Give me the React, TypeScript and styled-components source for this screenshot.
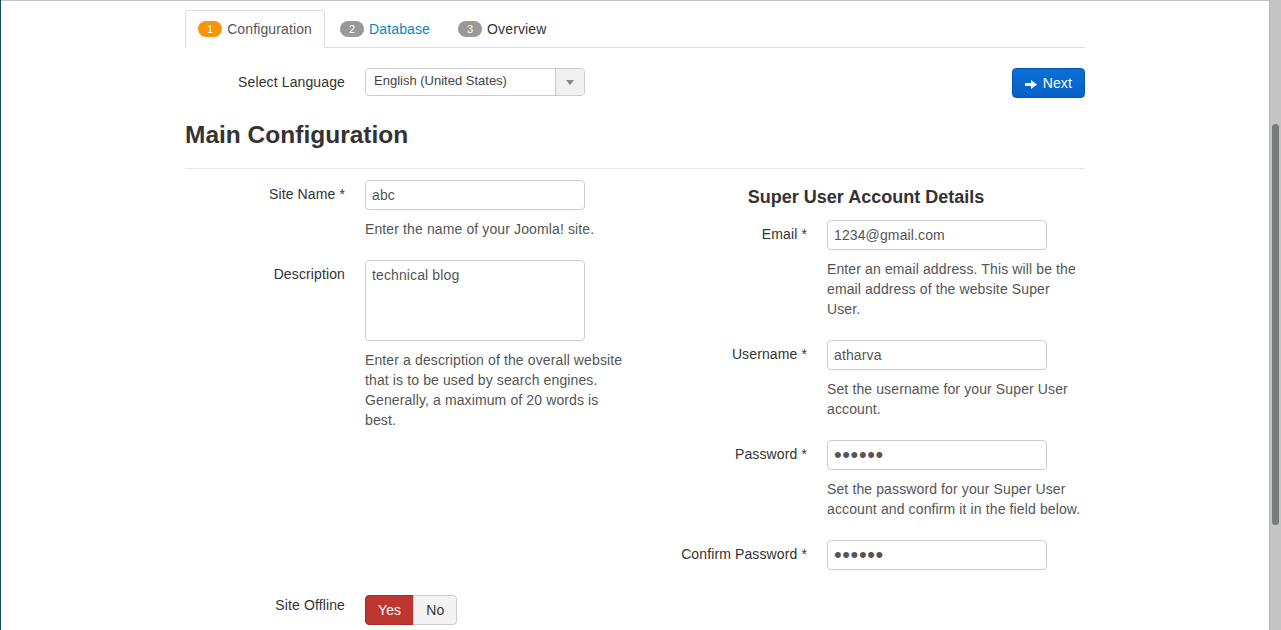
import React from "react";
import styled, { createGlobalStyle } from "styled-components";

const GlobalStyle = createGlobalStyle`
  html, body { margin: 0; padding: 0; background: #fff; }
  body {
    font-family: "Liberation Sans", Arial, Helvetica, sans-serif;
    font-size: 14px;
    line-height: 20px;
    letter-spacing: 0.12px;
    color: #333;
  }
  * { box-sizing: border-box; }
`;

const Frame = styled.div`
  display: flex;
  height: 630px;
  overflow: hidden;
  border-left: 1px solid #1d4a66;
`;

const Viewport = styled.div`
  flex: 1;
  min-width: 0;
  border-top: 1px solid #c4c4c4;
  overflow: hidden;
`;

const ScrollTrack = styled.div`
  width: 12px;
  flex: none;
  background: #c4c4c4;
  border-left: 1px solid #b2b2b2;
  padding-top: 124px;
  display: flex;
  justify-content: center;
`;

const ScrollThumb = styled.div`
  width: 7px;
  height: 401px;
  border-radius: 4px;
  background: #777b7b;
`;

const Container = styled.div`
  width: 900px;
  margin: 0 auto;
  padding-top: 9px;
`;

const TabList = styled.ul`
  display: flex;
  list-style: none;
  margin: 0 0 20px;
  padding: 0;
  border-bottom: 1px solid #ddd;
`;

const Tab = styled.li<{ $active?: boolean; $tone: string }>`
  display: flex;
  align-items: center;
  gap: 5px;
  margin: 0 2px -1px 0;
  padding: 8px 12px;
  line-height: 20px;
  border: 1px solid ${(p) => (p.$active ? "#ddd" : "transparent")};
  border-bottom-color: transparent;
  border-radius: 4px 4px 0 0;
  background: ${(p) => (p.$active ? "#fff" : "transparent")};
  color: ${(p) => p.$tone};
`;

const Badge = styled.span<{ $color: string }>`
  display: inline-block;
  padding: 1px 9px;
  border-radius: 9px;
  font-size: 11px;
  line-height: 14px;
  letter-spacing: 0;
  color: #fff;
  background: ${(p) => p.$color};
`;

const TopRow = styled.div`
  display: flex;
  justify-content: space-between;
  align-items: flex-start;
  height: 30px;
  margin-bottom: 17px;
`;

const FieldGroup = styled.div<{ $last?: boolean }>`
  display: grid;
  grid-template-columns: 160px 1fr;
  column-gap: 20px;
  margin-bottom: ${(p) => (p.$last ? "0" : "21px")};
`;

const FieldLabel = styled.label<{ $flush?: boolean }>`
  text-align: right;
  padding-top: ${(p) => (p.$flush ? "0" : "4px")};
  line-height: 20px;
  color: #333;
`;

const Controls = styled.div`
  min-width: 0;
`;

const SelectBox = styled.div`
  display: flex;
  width: 220px;
  height: 28px;
  border: 1px solid #ccc;
  border-radius: 4px;
  background: #fff;
  overflow: hidden;
`;

const SelectValue = styled.span`
  flex: 1;
  padding: 0 8px;
  font-size: 13px;
  line-height: 24px;
  letter-spacing: 0;
  color: #444;
`;

const SelectArrow = styled.span`
  width: 29px;
  display: flex;
  align-items: center;
  justify-content: center;
  background: #f0f0f0;
  border-left: 1px solid #ccc;
`;

const NextButton = styled.button`
  display: flex;
  align-items: center;
  gap: 6px;
  padding: 4px 12px;
  font-family: inherit;
  font-size: 14px;
  line-height: 20px;
  letter-spacing: 0.12px;
  color: #fff;
  border: 1px solid #0456ad;
  border-radius: 4px;
  background: linear-gradient(#0b6fd7, #0562c6);
  cursor: pointer;
`;

const ArrowIcon = styled.svg`
  width: 12px;
  height: 9px;
  margin-top: 3px;
`;

const Title = styled.h2`
  margin: 0;
  font-size: 24.5px;
  line-height: 40px;
  font-weight: bold;
  letter-spacing: 0;
  color: #333;
`;

const Divider = styled.hr`
  height: 0;
  border: 0;
  border-top: 1px solid #e5e5e5;
  margin: 13px 0 11px;
`;

const Columns = styled.div`
  display: grid;
  grid-template-columns: 440px 438px;
  column-gap: 22px;
  align-items: start;
  margin-bottom: 4px;
`;

const Column = styled.div``;

const SectionHeading = styled.h3`
  margin: 0 0 6px;
  font-size: 18px;
  line-height: 34px;
  font-weight: bold;
  letter-spacing: 0;
  text-align: center;
  color: #333;
`;

const TextInput = styled.input`
  display: block;
  width: 220px;
  height: 30px;
  padding: 4px 6px;
  font-family: inherit;
  font-size: 14px;
  line-height: 20px;
  letter-spacing: 0.12px;
  color: #555;
  border: 1px solid #ccc;
  border-radius: 4px;
  background: #fff;
  outline: none;
`;

const PasswordInput = styled(TextInput)`
  font-size: 22px;
  letter-spacing: 0.6px;
  color: #555;
`;

const TextArea = styled.textarea`
  display: block;
  width: 220px;
  height: 81px;
  padding: 4px 6px;
  font-family: inherit;
  font-size: 14px;
  line-height: 20px;
  letter-spacing: 0.12px;
  color: #555;
  border: 1px solid #ccc;
  border-radius: 4px;
  resize: none;
  outline: none;
`;

const HelpText = styled.p`
  margin: 9px 0 0;
  color: #555;
  line-height: 20px;
`;

const ButtonGroup = styled.div`
  display: flex;
`;

const ToggleButton = styled.button<{ $active?: boolean; $first?: boolean }>`
  padding: 4px 12px;
  margin-left: ${(p) => (p.$first ? "0" : "-1px")};
  font-family: inherit;
  font-size: 14px;
  line-height: 20px;
  letter-spacing: 0.12px;
  color: ${(p) => (p.$active ? "#fff" : "#333")};
  background: ${(p) => (p.$active ? "#bd362f" : "#f3f3f3")};
  border: 1px solid ${(p) => (p.$active ? "#a52e28" : "#ccc")};
  border-radius: ${(p) => (p.$first ? "4px 0 0 4px" : "0 4px 4px 0")};
  cursor: pointer;
`;

export default function App() {
  return (
    <>
      <GlobalStyle />
      <Frame>
        <Viewport>
          <Container>
            <TabList>
              <Tab $active $tone="#555">
                <Badge $color="#f89406">1</Badge>
                Configuration
              </Tab>
              <Tab $tone="#0088cc">
                <Badge $color="#999">2</Badge>
                Database
              </Tab>
              <Tab $tone="#333">
                <Badge $color="#999">3</Badge>
                Overview
              </Tab>
            </TabList>

            <TopRow>
              <FieldGroup $last>
                <FieldLabel>Select Language</FieldLabel>
                <Controls>
                  <SelectBox>
                    <SelectValue>English (United States)</SelectValue>
                    <SelectArrow>
                      <svg width="8" height="5" viewBox="0 0 8 5">
                        <path d="M0 0h8L4 5z" fill="#888" />
                      </svg>
                    </SelectArrow>
                  </SelectBox>
                </Controls>
              </FieldGroup>
              <NextButton type="button">
                <ArrowIcon viewBox="0 0 12 9">
                  <path d="M0 3h6V0l6 4.5L6 9V6H0z" fill="#fff" />
                </ArrowIcon>
                Next
              </NextButton>
            </TopRow>

            <Title>Main Configuration</Title>
            <Divider />

            <Columns>
              <Column>
                <FieldGroup>
                  <FieldLabel>Site Name *</FieldLabel>
                  <Controls>
                    <TextInput type="text" defaultValue="abc" />
                    <HelpText>Enter the name of your Joomla! site.</HelpText>
                  </Controls>
                </FieldGroup>
                <FieldGroup>
                  <FieldLabel>Description</FieldLabel>
                  <Controls>
                    <TextArea defaultValue="technical blog" />
                    <HelpText>
                      Enter a description of the overall website that is to be used by search engines.
                      Generally, a maximum of 20 words is best.
                    </HelpText>
                  </Controls>
                </FieldGroup>
              </Column>
              <Column>
                <SectionHeading>Super User Account Details</SectionHeading>
                <FieldGroup>
                  <FieldLabel>Email *</FieldLabel>
                  <Controls>
                    <TextInput type="text" defaultValue="1234@gmail.com" />
                    <HelpText>
                      Enter an email address. This will be the email address of the website Super User.
                    </HelpText>
                  </Controls>
                </FieldGroup>
                <FieldGroup>
                  <FieldLabel>Username *</FieldLabel>
                  <Controls>
                    <TextInput type="text" defaultValue="atharva" />
                    <HelpText>Set the username for your Super User account.</HelpText>
                  </Controls>
                </FieldGroup>
                <FieldGroup>
                  <FieldLabel>Password *</FieldLabel>
                  <Controls>
                    <PasswordInput type="password" defaultValue="123456" />
                    <HelpText>
                      Set the password for your Super User account and confirm it in the field below.
                    </HelpText>
                  </Controls>
                </FieldGroup>
                <FieldGroup>
                  <FieldLabel>Confirm Password *</FieldLabel>
                  <Controls>
                    <PasswordInput type="password" defaultValue="123456" />
                  </Controls>
                </FieldGroup>
              </Column>
            </Columns>

            <FieldGroup $last>
              <FieldLabel $flush>Site Offline</FieldLabel>
              <Controls>
                <ButtonGroup>
                  <ToggleButton type="button" $active $first>
                    Yes
                  </ToggleButton>
                  <ToggleButton type="button">No</ToggleButton>
                </ButtonGroup>
              </Controls>
            </FieldGroup>
          </Container>
        </Viewport>
        <ScrollTrack>
          <ScrollThumb />
        </ScrollTrack>
      </Frame>
    </>
  );
}
